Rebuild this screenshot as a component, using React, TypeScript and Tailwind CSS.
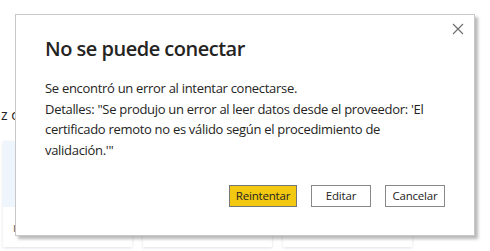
import React from 'react';

const font = { fontFamily: '"Open Sans", "Noto Sans", sans-serif' };

function Card({ tint }: { tint?: boolean }) {
  return (
    <div className="w-[129px] h-[106px] flex flex-col bg-white shadow-[0_1px_3px_rgba(0,0,0,0.12)]">
      <div className={`h-[66px] ${tint ? 'bg-[#eef5fc]' : 'bg-white'}`} />
      <div className="flex-1 px-[10px] pt-[12px] text-[12px] text-[#605e5c]">ı</div>
    </div>
  );
}

export default function App() {
  return (
    <div className="relative w-[490px] h-[251px] overflow-hidden bg-white" style={font}>
      {/* page behind the dialog */}
      <div className="pt-[104px] pl-[1px] text-[14px] text-[#252423]">z c</div>
      <div className="flex gap-[11px] pl-[3px] pt-[16px]">
        <Card tint />
        <Card />
        <Card />
      </div>

      {/* dialog */}
      <div className="absolute left-[15px] top-[14px] w-[460px] h-[222px] bg-white border border-[#c8c8c8] shadow-[3px_3px_3px_rgba(0,0,0,0.28)] flex flex-col pl-[29px] pr-[29px]">
        <button className="absolute right-[9px] top-[7px] w-[14px] h-[14px] flex items-center justify-center text-[#605e5c]">
          <svg width="12" height="12" viewBox="0 0 12 12" fill="none">
            <path d="M1 1L11 11M11 1L1 11" stroke="#6b6b6b" strokeWidth="1.1" />
          </svg>
        </button>
        <h1 className="mt-[20px] text-[20px] leading-[28px] font-semibold text-[#252423] tracking-[-0.5px]">
          No se puede conectar
        </h1>
        <div className="mt-[15px] text-[13px] leading-[20.5px] text-[#252423] tracking-[-0.3px]">
          <p>Se encontró un error al intentar conectarse.</p>
          <p>
            Detalles: "Se produjo un error al leer datos desde el proveedor: 'El
            <br />
            certificado remoto no es válido según el procedimiento de
            <br />
            validación.'"
          </p>
        </div>
        <div className="mt-auto mb-[28px] flex justify-end gap-[14px]">
          <button className="h-[22px] w-[68px] bg-[#f2c811] border border-[#767676] text-[11.5px] text-[#252423] tracking-[-0.2px]">
            Reintentar
          </button>
          <button className="h-[22px] w-[60px] bg-white border border-[#8a8886] text-[11.5px] text-[#252423] tracking-[-0.2px]">
            Editar
          </button>
          <button className="h-[22px] w-[60px] bg-white border border-[#8a8886] text-[11.5px] text-[#252423] tracking-[-0.2px]">
            Cancelar
          </button>
        </div>
      </div>
    </div>
  );
}
